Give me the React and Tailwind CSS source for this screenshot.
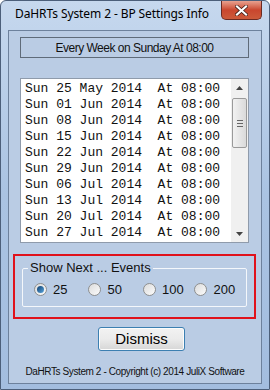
import React from "react";

const rows = [
  "Sun 25 May 2014  At 08:00",
  "Sun 01 Jun 2014  At 08:00",
  "Sun 08 Jun 2014  At 08:00",
  "Sun 15 Jun 2014  At 08:00",
  "Sun 22 Jun 2014  At 08:00",
  "Sun 29 Jun 2014  At 08:00",
  "Sun 06 Jul 2014  At 08:00",
  "Sun 13 Jul 2014  At 08:00",
  "Sun 20 Jul 2014  At 08:00",
  "Sun 27 Jul 2014  At 08:00",
];

const choices = ["25", "50", "100", "200"];

function Radio({ checked }) {
  return (
    <span className="w-[13px] h-[13px] rounded-full border border-[#8e8f8f] bg-gradient-to-br from-[#dcdcdc] to-[#fbfbfb] flex items-center justify-center shrink-0">
      {checked && <span className="w-[7px] h-[7px] rounded-full bg-gradient-to-br from-[#0d3f70] to-[#5ba8e0]" />}
    </span>
  );
}

export default function App() {
  return (
    <div className="w-[270px] h-[390px] flex flex-col bg-gradient-to-b from-[#c6d8ee] via-[#aac3e2] to-[#a3bddf] border border-[#4c5f7a] rounded-t-[6px] overflow-hidden" style={{ fontFamily: "'Liberation Sans', Arial, sans-serif" }}>
      <div className="h-[29px] flex items-start justify-between shrink-0">
        <span className="pl-[14px] pt-[4px] text-[12px] tracking-[-0.1px] whitespace-nowrap text-black" style={{ fontFamily: "'Noto Sans', sans-serif" }}>
          DaHRTs System 2 - BP Settings Info
        </span>
        <div className="mr-[7px] w-[41px] h-[19px] shrink-0 rounded-b-[5px] border border-t-0 border-[#6b2a22] bg-gradient-to-b from-[#e7a18f] via-[#c9462e] to-[#cc5a3a] flex items-center justify-center">
          <svg width="13" height="11" viewBox="0 0 13 11">
            <path d="M2 1.5 L11 9.5 M11 1.5 L2 9.5" stroke="#3a1a14" strokeWidth="3.6" strokeLinecap="square" />
            <path d="M2 1.5 L11 9.5 M11 1.5 L2 9.5" stroke="#ffffff" strokeWidth="2.2" strokeLinecap="square" />
          </svg>
        </div>
      </div>

      <div className="mx-[7px] h-[354px] bg-[#bacce4] border border-[#6d819c] flex flex-col">
        <div className="mt-[6px] ml-[11px] w-[229px] h-[21px] border border-[#5f6b79] flex items-center justify-center text-[12px] tracking-[-0.5px] text-[#111]">
          Every Week on Sunday At 08:00
        </div>

        <div className="mt-[20px] ml-[11px] w-[229px] h-[165px] border border-[#8f9bab] bg-white flex">
          <div className="flex-1 pl-[4px] pt-[2px] text-[13px] leading-[16px] text-[#111] whitespace-pre" style={{ fontFamily: "'Liberation Mono', 'Courier New', monospace" }}>
            {rows.map((r) => (
              <div key={r}>{r}</div>
            ))}
          </div>
          <div className="w-[17px] bg-[#f0f0f0] flex flex-col items-center">
            <div className="h-[17px] flex items-center justify-center">
              <svg width="7" height="4" viewBox="0 0 7 4"><path d="M0 4 L3.5 0 L7 4 Z" fill="#444" /></svg>
            </div>
            <div className="mt-[2px] w-[15px] h-[50px] rounded-[2px] border border-[#9a9a9a] bg-gradient-to-r from-[#f2f2f2] to-[#dadada] flex flex-col items-center justify-center gap-[2px]">
              <span className="w-[6px] h-px bg-[#666]" />
              <span className="w-[6px] h-px bg-[#666]" />
              <span className="w-[6px] h-px bg-[#666]" />
            </div>
            <div className="flex-1" />
            <div className="h-[17px] flex items-center justify-center">
              <svg width="7" height="4" viewBox="0 0 7 4"><path d="M0 0 L3.5 4 L7 0 Z" fill="#444" /></svg>
            </div>
          </div>
        </div>

        <div className="mt-[11px] ml-[4px] w-[243px] h-[65px] border-2 border-[#e0121b] flex">
          <div className="relative mt-[12px] ml-[7px] w-[225px] h-[39px] border border-[#f4f7fb] rounded-[2px]">
            <span className="absolute -top-[8px] left-[5px] px-[2px] bg-[#bacce4] text-[13px] leading-[14px] text-[#111]">
              Show Next ... Events
            </span>
            <div className="flex items-center h-full pt-[4px] pl-[11px] text-[13px] text-[#111]">
              {choices.map((c, i) => (
                <div key={c} className={`flex items-center gap-[6px] ${i < 2 ? "w-[55px]" : "w-[52px]"}`}>
                  <Radio checked={i === 0} />
                  <span>{c}</span>
                </div>
              ))}
            </div>
          </div>
        </div>

        <div className="mt-[8px] ml-[89px] w-[87px] h-[24px] rounded-[3px] border border-[#3c7fb1] bg-gradient-to-b from-[#f2f2f2] via-[#ebebeb] to-[#d6d6d6] shadow-[inset_0_0_0_1px_#fcfcfc] flex items-center justify-center text-[15px] text-black">
          Dismiss
        </div>

        <div className="mt-[13px] text-center text-[10px] tracking-[-0.4px] text-[#111]">
          DaHRTs System 2 - Copyright (c) 2014 JuliX Software
        </div>
      </div>
    </div>
  );
}
